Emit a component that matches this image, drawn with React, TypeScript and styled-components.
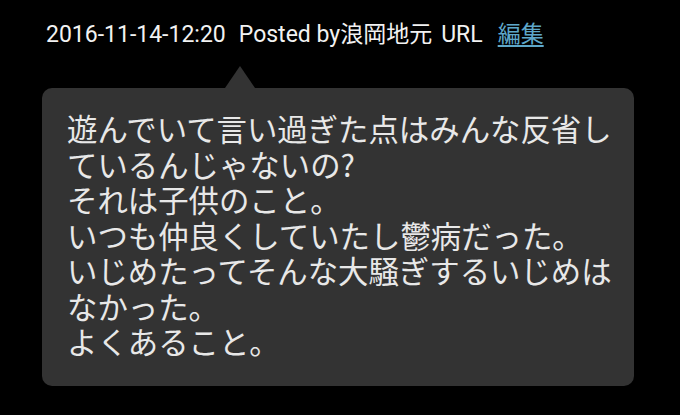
import styled, { createGlobalStyle } from "styled-components";

const GlobalStyle = createGlobalStyle`
  html, body {
    margin: 0;
    padding: 0;
    background: #000;
    width: 680px;
    height: 415px;
    overflow: hidden;
  }
`;

const Page = styled.div`
  display: flex;
  flex-direction: column;
  padding: 19px 0 0 46px;
  width: 680px;
  height: 415px;
  box-sizing: border-box;
  background: #000;
`;

const Meta = styled.div`
  display: flex;
  align-items: baseline;
  font-family: Roboto, "Noto Sans CJK JP", sans-serif;
  font-size: 23px;
  line-height: 31px;
  color: #f2f2f2;
  white-space: pre;
`;

const MetaItem = styled.span<{ $gap?: number }>`
  margin-left: ${(p) => p.$gap ?? 0}px;
`;

const EditLink = styled.a`
  color: #5ea7c9;
  text-decoration: underline;
  text-underline-offset: 3px;
  margin-left: 15px;
`;

const Bubble = styled.div`
  position: relative;
  margin: 38px 0 0 -4px;
  width: 592px;
  box-sizing: border-box;
  padding: 23px 8px 26px 25px;
  background: #333333;
  border-radius: 10px;
  font-family: "Noto Sans CJK JP", sans-serif;
  font-size: 30.4px;
  line-height: 35.5px;
  color: #e8e8e8;

  &::before {
    content: "";
    position: absolute;
    left: 183px;
    top: -22px;
    border-left: 15px solid transparent;
    border-right: 15px solid transparent;
    border-bottom: 22px solid #333333;
  }
`;

const Line = styled.div`
  white-space: nowrap;
`;

const lines = [
  "遊んでいて言い過ぎた点はみんな反省し",
  "ているんじゃないの?",
  "それは子供のこと。",
  "いつも仲良くしていたし鬱病だった。",
  "いじめたってそんな大騒ぎするいじめは",
  "なかった。",
  "よくあること。",
];

export default function App() {
  return (
    <>
      <GlobalStyle />
      <Page>
        <Meta>
          <MetaItem>2016-11-14-12:20</MetaItem>
          <MetaItem $gap={13}>Posted by浪岡地元</MetaItem>
          <MetaItem $gap={9}>URL</MetaItem>
          <EditLink>編集</EditLink>
        </Meta>
        <Bubble>
          {lines.map((l) => (
            <Line key={l}>{l}</Line>
          ))}
        </Bubble>
      </Page>
    </>
  );
}
